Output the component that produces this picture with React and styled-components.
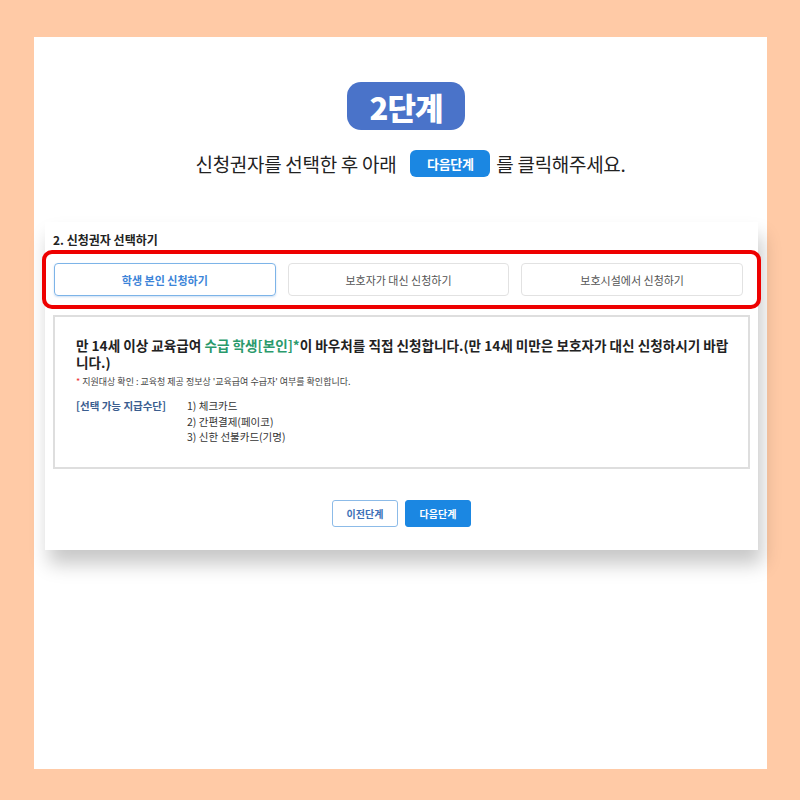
import React from 'react'
import styled, { createGlobalStyle } from 'styled-components'

const Global = createGlobalStyle`
  html, body {
    margin: 0;
    padding: 0;
    background: #ffcaa6;
  }
  body {
    font-family: "Noto Sans CJK KR", "Noto Sans", sans-serif;
    color: #222;
  }
`;

const Frame = styled.div`
  width: 800px;
  height: 800px;
  box-sizing: border-box;
  padding: 37px 33px 31px 34px;
  background: #ffcaa6;
`;

const Sheet = styled.div`
  height: 100%;
  background: #fff;
  display: flex;
  flex-direction: column;
  align-items: center;
  padding-top: 45px;
  box-sizing: border-box;
`;

const StepBadge = styled.div`
  width: 118px;
  height: 48px;
  margin-left: 11px;
  border-radius: 14px;
  background: #4a73c9;
  color: #fff;
  font-size: 31px;
  font-weight: 900;
  letter-spacing: -1px;
  display: flex;
  align-items: center;
  justify-content: center;
`;

const Guide = styled.p`
  margin: 20px 0 0 20px;
  font-size: 19px;
  letter-spacing: -0.3px;
  color: #222;
  display: flex;
  align-items: center;
`;

const InlineBadge = styled.span`
  display: inline-flex;
  align-items: center;
  justify-content: center;
  width: 80px;
  height: 27px;
  border-radius: 6px;
  background: #1b87e2;
  color: #fff;
  font-size: 13px;
  font-weight: 700;
  margin: 0 6px 0 14px;
`;

const Shot = styled.div`
  margin-top: 45px;
  align-self: flex-start;
  margin-left: 11px;
  width: 713px;
  height: 328px;
  background: #fff;
  box-shadow: 4px 14px 18px rgba(0, 0, 0, 0.22);
  box-sizing: border-box;
  padding: 11px 8px 0 8px;
  display: flex;
  flex-direction: column;
`;

const SectionTitle = styled.div`
  font-size: 12px;
  font-weight: 700;
  color: #222;
  line-height: 14px;
`;

const Highlight = styled.div`
  margin: 3px -11px 0 -11px;
  border: 4px solid #ee0000;
  border-radius: 10px;
  padding: 9px 14px 9px 8px;
  display: grid;
  grid-template-columns: repeat(3, 1fr);
  gap: 12px;
`;

const Choice = styled.div`
  height: 33px;
  border-radius: 4px;
  border: 1.5px solid ${p => (p.$active ? '#7db4e8' : '#e2e2e2')};
  box-shadow: ${p => (p.$active ? '0 1px 2px rgba(60,130,210,0.25)' : 'none')};
  color: ${p => (p.$active ? '#3c84d8' : '#555')};
  font-weight: ${p => (p.$active ? 700 : 400)};
  font-size: 11px;
  display: flex;
  align-items: center;
  justify-content: center;
  box-sizing: border-box;
`;

const InfoBox = styled.div`
  margin-top: 6px;
  height: 154px;
  border: 2px solid #dedede;
  box-sizing: border-box;
  padding: 20px 20px 0 21px;
`;

const Lead = styled.div`
  font-size: 13.6px;
  font-weight: 700;
  line-height: 17px;
  color: #222;
  word-break: break-all;
  width: 660px;
`;

const Green = styled.span`
  color: #2b9a6c;
`;

const Note = styled.div`
  margin-top: 4px;
  font-size: 9px;
  color: #444;
`;

const Star = styled.span`
  color: #e33;
`;

const PayRow = styled.div`
  margin-top: 10px;
  display: flex;
  font-size: 10.5px;
  line-height: 15.5px;
`;

const PayLabel = styled.div`
  width: 111px;
  color: #3a5d8f;
  font-weight: 700;
`;

const PayList = styled.div`
  display: flex;
  flex-direction: column;
  color: #333;
`;

const Actions = styled.div`
  margin-top: 31px;
  display: flex;
  justify-content: center;
  gap: 7px;
`;

const ActionButton = styled.div`
  width: 66px;
  height: 27px;
  box-sizing: border-box;
  border-radius: 3px;
  border: 1.5px solid ${p => (p.$primary ? '#1b87e2' : '#8cbbe8')};
  background: ${p => (p.$primary ? '#1b87e2' : '#fff')};
  color: ${p => (p.$primary ? '#fff' : '#3b6fb6')};
  font-size: 10px;
  font-weight: 700;
  display: flex;
  align-items: center;
  justify-content: center;
`;

const choices = ['학생 본인 신청하기', '보호자가 대신 신청하기', '보호시설에서 신청하기'];

export default function App() {
  return (
    <Frame>
      <Global />
      <Sheet>
        <StepBadge>2단계</StepBadge>
        <Guide>
          신청권자를 선택한 후 아래<InlineBadge>다음단계</InlineBadge>를 클릭해주세요.
        </Guide>
        <Shot>
          <SectionTitle>2. 신청권자 선택하기</SectionTitle>
          <Highlight>
            {choices.map((c, i) => (
              <Choice key={c} $active={i === 0}>{c}</Choice>
            ))}
          </Highlight>
          <InfoBox>
            <Lead>
              만 14세 이상 교육급여 <Green>수급 학생[본인]*</Green>이 바우처를 직접 신청합니다.(만 14세 미만은 보호자가 대신 신청하시기 바랍니다.)
            </Lead>
            <Note>
              <Star>*</Star> 지원대상 확인 : 교육청 제공 정보상 '교육급여 수급자' 여부를 확인합니다.
            </Note>
            <PayRow>
              <PayLabel>[선택 가능 지급수단]</PayLabel>
              <PayList>
                <span>1) 체크카드</span>
                <span>2) 간편결제(페이코)</span>
                <span>3) 신한 선불카드(기명)</span>
              </PayList>
            </PayRow>
          </InfoBox>
          <Actions>
            <ActionButton>이전단계</ActionButton>
            <ActionButton $primary>다음단계</ActionButton>
          </Actions>
        </Shot>
      </Sheet>
    </Frame>
  )
}
